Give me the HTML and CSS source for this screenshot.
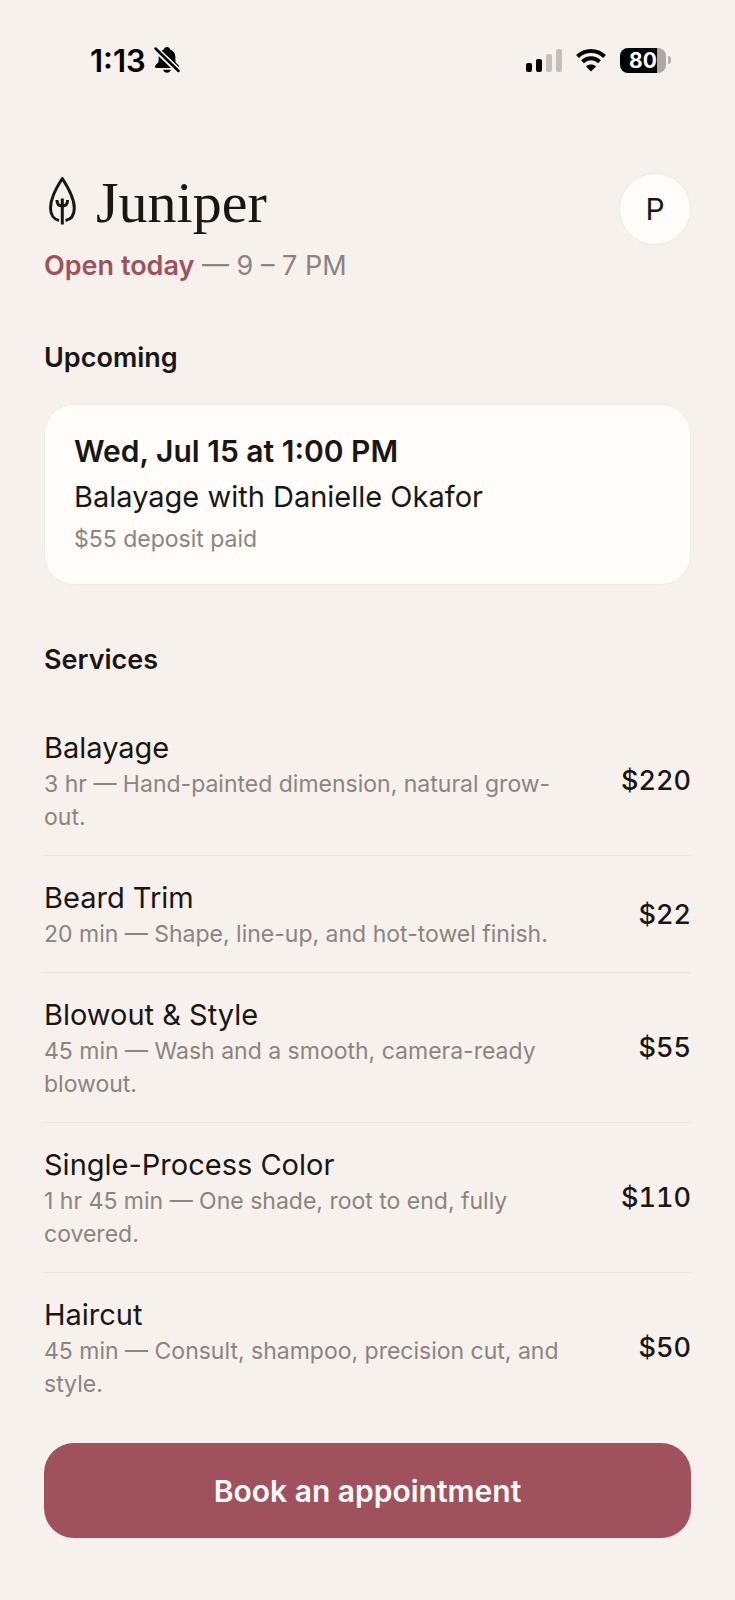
FILE: index.html
```html
<!DOCTYPE html>
<html lang="en">

<head>
    <meta charset="UTF-8">
    <meta name="viewport" content="width=device-width, initial-scale=1.0">
    <title>Juniper</title>
    <link rel="stylesheet" href="styles.css">
</head>

<body>
    <div class="status-bar">
        <div class="status-left">
            <span class="time">1:13</span>
            <svg width="26" height="28" viewBox="0 0 26 28" aria-hidden="true">
                <path d="M13 1c-1.700 0-2.900 1-3.200 2.400C6.300 4.700 4.600 7.600 4.600 11v4.200c0 1.800-3.600 3.600-3.600 5.300 0 .9.700 1.500 1.700 1.500h20.600c1 0 1.700-.6 1.700-1.500 0-1.700-3.600-3.500-3.600-5.300V11c0-3.400-1.700-6.300-5.200-7.600C15.900 2 14.700 1 13 1z" />
                <path d="M9.200 23.800h7.600c-.4 1.900-1.900 3-3.800 3s-3.400-1.100-3.800-3z" />
                <path class="slash-gap" d="M1 2.500l24 23" />
                <path class="slash" d="M1.500 2.500l23 22.500" />
            </svg>
        </div>
        <div class="status-right">
            <svg width="36" height="24" viewBox="0 0 36 24" aria-hidden="true">
                <rect x="0" y="15" width="6" height="9" rx="2" />
                <rect x="10" y="11" width="6" height="13" rx="2" />
                <rect class="off" x="20" y="6" width="6" height="18" rx="2" />
                <rect class="off" x="30" y="1" width="6" height="23" rx="2" />
            </svg>
            <svg width="32" height="24" viewBox="0 0 32 24" aria-hidden="true">
                <g class="wifi">
                    <path d="M2.500 8.500C10 1 22 1 29.500 8.500" />
                    <path d="M7.500 13.800c4.800-4.600 12.200-4.600 17 0" />
                </g>
                <path d="M16 23.500l-5-5c2.800-2.600 7.200-2.600 10 0z" />
            </svg>
            <div class="battery">
                <span>80</span>
                <i></i>
            </div>
        </div>
    </div>

    <header class="header">
        <div>
            <div class="brand">
                <svg width="32" height="56" viewBox="0 0 32 56" aria-hidden="true">
                    <path d="M15 45.500C10 44.500 6.500 40 6.500 33 6.500 22.500 13 11.500 18.300 3.500 23.500 11.500 30.300 22.500 30.300 33c0 7-3.500 11.500-8.800 12.500" />
                    <path d="M18.300 23.500v26M13 25c0 4 2 6 5.300 6s5.300-2 5.300-6" />
                </svg>
                <h1>Juniper</h1>
            </div>
            <p class="hours"><strong>Open today</strong> — 9 – 7 PM</p>
        </div>
        <button class="avatar" type="button" aria-label="Profile">P</button>
    </header>

    <main>
        <h2>Upcoming</h2>
        <div class="card">
            <p class="card-date">Wed, Jul 15 at 1:00 PM</p>
            <p class="card-title">Balayage with Danielle Okafor</p>
            <p class="card-note">$55 deposit paid</p>
        </div>

        <h2>Services</h2>
        <ul class="services">
            <li>
                <div class="service">
                    <h3>Balayage</h3>
                    <p>3 hr — Hand-painted dimension, natural grow-out.</p>
                </div>
                <span class="price">$220</span>
            </li>
            <li>
                <div class="service">
                    <h3>Beard Trim</h3>
                    <p>20 min — Shape, line-up, and hot-towel finish.</p>
                </div>
                <span class="price">$22</span>
            </li>
            <li>
                <div class="service">
                    <h3>Blowout &amp; Style</h3>
                    <p>45 min — Wash and a smooth, camera-ready blowout.</p>
                </div>
                <span class="price">$55</span>
            </li>
            <li>
                <div class="service">
                    <h3>Single-Process Color</h3>
                    <p>1 hr 45 min — One shade, root to end, fully covered.</p>
                </div>
                <span class="price">$110</span>
            </li>
            <li>
                <div class="service">
                    <h3>Haircut</h3>
                    <p>45 min — Consult, shampoo, precision cut, and style.</p>
                </div>
                <span class="price">$50</span>
            </li>
        </ul>
    </main>

    <button class="book" type="button">Book an appointment</button>
</body>

</html>
```
FILE: styles.css
```css
* {
    box-sizing: border-box;
}

body {
    margin: 0;
    padding: 42px 44px 62px;
    background-color: #f6f1ed;
    color: #1a1614;
    font-family: Inter, "Liberation Sans", sans-serif;
}

h1, h2, h3, p, ul {
    margin: 0;
    padding: 0;
}

button {
    font-family: inherit;
    cursor: pointer;
}

/* status bar */
.status-bar {
    display: flex;
    justify-content: space-between;
    align-items: center;
    height: 36px;
    padding: 0 20px 0 46px;
    color: #000;
}

.status-left {
    display: flex;
    align-items: center;
    gap: 8px;
}

.time {
    font-size: 31px;
    font-weight: 600;
}

.slash-gap {
    stroke: #f6f1ed;
    stroke-width: 6;
}

.slash {
    stroke: #000;
    stroke-width: 2.5;
    stroke-linecap: round;
}

.status-right {
    display: flex;
    align-items: center;
    gap: 13px;
}

.off {
    fill: #c3bfbc;
}

.wifi {
    fill: none;
    stroke: #000;
    stroke-width: 4;
}

.battery {
    display: flex;
    align-items: center;
    gap: 2px;
}

.battery span {
    width: 46px;
    height: 25px;
    border-radius: 8px;
    background: linear-gradient(to right, #000 80%, #aba8a5 80%);
    color: #fff;
    font-size: 21px;
    font-weight: 700;
    line-height: 25px;
    text-align: center;
}

.battery i {
    width: 3px;
    height: 8px;
    border-radius: 0 4px 4px 0;
    background-color: #b5b1ae;
}

/* header */
.header {
    display: flex;
    justify-content: space-between;
    align-items: flex-start;
    margin-top: 95px;
}

.brand {
    display: flex;
    align-items: center;
    gap: 20px;
}

.brand svg {
    fill: none;
    stroke: #1a1614;
    stroke-width: 3;
    stroke-linejoin: round;
}

h1 {
    font-family: "Liberation Serif", serif;
    font-size: 58px;
    font-weight: 400;
    line-height: 60px;
}

.hours {
    margin-top: 16px;
    color: #8c8480;
    font-size: 27px;
    line-height: 34px;
}

.hours strong {
    color: #9f525e;
    font-weight: 600;
}

.avatar {
    width: 72px;
    height: 72px;
    padding: 0;
    border: 1px solid #f0ebe7;
    border-radius: 50%;
    background-color: #fffcfa;
    color: #1a1614;
    font-size: 30px;
}

h2 {
    margin: 58px 0 29px;
    font-size: 27px;
    font-weight: 600;
    line-height: 34px;
}

/* upcoming */
.card {
    padding: 24px 29px 28px;
    border: 1px solid #f0ebe7;
    border-radius: 30px;
    background-color: #fffcfa;
}

.card-date,
.card-title {
    line-height: 45px;
}

.card-date {
    font-size: 30px;
    font-weight: 600;
}

.card-title {
    font-size: 29px;
}

.card-note {
    margin-top: 4px;
    color: #8c8480;
    font-size: 23px;
    line-height: 33px;
}

/* services */
.services {
    list-style: none;
}

.services li {
    display: flex;
    justify-content: space-between;
    align-items: center;
    gap: 40px;
    padding: 21px 0;
    border-bottom: 1px solid #ebe6e2;
}

.services li:last-child {
    border-bottom: none;
}

h3 {
    font-size: 29px;
    font-weight: 400;
    line-height: 41px;
}

.service p {
    color: #8c8480;
    font-size: 23px;
    line-height: 33px;
}

.price {
    font-size: 27px;
    font-weight: 500;
    font-variant-numeric: tabular-nums;
}

.book {
    display: block;
    width: 100%;
    height: 95px;
    margin-top: 21px;
    border: none;
    border-radius: 30px;
    background-color: #9f525e;
    color: #fffcfa;
    font-size: 30px;
    font-weight: 600;
}
```
